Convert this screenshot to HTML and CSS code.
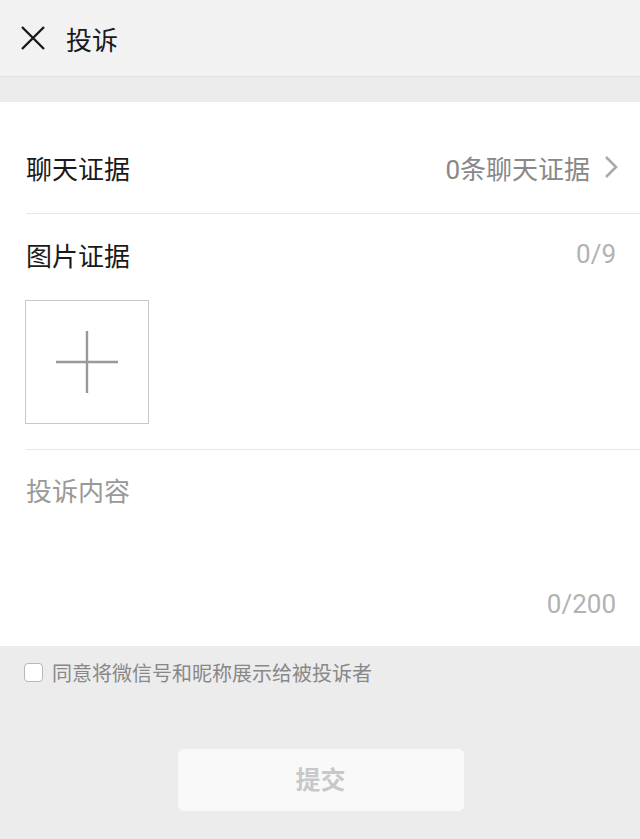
FILE: index.html
```html
<!DOCTYPE html>
<html>
  <head>
  <meta charset="utf-8">
  <link rel="stylesheet" href="styles.css">
  </head>
  <body>
    <div class="topbar">
      <svg class="close_icon" width="26" height="26" viewBox="0 0 26 26">
        <path d="M2 2 L24 24 M24 2 L2 24" stroke="#1a1a1a" stroke-width="2.4" fill="none"/>
      </svg>
      <span class="title">投诉</span>
    </div>
    <div class="gap"></div>
    <div class="panel">
      <div class="row chat_row">
        <span class="label">聊天证据</span>
        <span class="chat_value">0条聊天证据
          <svg class="arrow" width="14" height="24" viewBox="0 0 14 24">
            <path d="M2 2 L12 12 L2 22" stroke="#aaa" stroke-width="2.6" fill="none"/>
          </svg>
        </span>
      </div>
      <div class="pic_block">
        <div class="row pic_head">
          <span class="label">图片证据</span>
          <span class="count">0/9</span>
        </div>
        <div class="add_box">
          <svg width="64" height="64" viewBox="0 0 64 64">
            <path d="M32 1 L32 63 M1 32 L63 32" stroke="#999" stroke-width="2.4" fill="none"/>
          </svg>
        </div>
      </div>
      <div class="content_block">
        <div class="placeholder">投诉内容</div>
        <div class="count words">0/200</div>
      </div>
    </div>
    <div class="agree">
      <span class="check"></span>
      <span>同意将微信号和昵称展示给被投诉者</span>
    </div>
    <div class="submit_wrap">
      <button class="submit_btn">提交</button>
    </div>
  </body>
</html>
```
FILE: styles.css
```css
body {
  margin: 0;
  background-color: #ececec;
  font-family: "Noto Sans CJK SC", "Noto Sans", sans-serif;
  height: 839px;
  overflow: hidden;
}
.topbar {
  height: 76px;
  background-color: #f2f2f2;
  border-bottom: 1px solid #e2e2e2;
  display: flex;
  align-items: center;
}
.close_icon {
  margin-left: 20px;
  margin-right: 20px;
}
.title {
  font-size: 26px;
  color: #1a1a1a;
}
.gap { height: 25px; }
.panel {
  background-color: white;
  padding-left: 26px;
}
.row {
  display: flex;
  justify-content: space-between;
  align-items: center;
  padding-right: 24px;
}
.label {
  font-size: 26px;
  color: #1a1a1a;
}
.chat_row {
  height: 112px;
  box-sizing: border-box;
  padding-top: 19px;
  border-bottom: 1px solid #e8e8e8;
  padding-right: 22px;
}
.chat_value {
  font-family: "Roboto", "Noto Sans CJK SC", sans-serif;
  font-size: 26px;
  color: #888;
  display: flex;
  align-items: center;
}
.arrow { margin-left: 14px; }
.pic_block {
  border-bottom: 1px solid #e8e8e8;
  padding-bottom: 25px;
}
.pic_head {
  height: 80px;
  margin-bottom: 6px;
}
.count {
  font-family: "Roboto", "Noto Sans CJK SC", sans-serif;
  font-size: 26px;
  color: #b2b2b2;
}
.add_box {
  width: 122px;
  height: 122px;
  margin-left: -1px;
  border: 1px solid #c8c8c8;
  display: flex;
  align-items: center;
  justify-content: center;
}
.content_block {
  height: 196px;
  display: flex;
  flex-direction: column;
  justify-content: space-between;
  padding-right: 24px;
  padding-top: 21px;
  padding-bottom: 27px;
  box-sizing: border-box;
}
.placeholder {
  font-size: 26px;
  color: #999;
}
.words { text-align: right; }
.agree {
  display: flex;
  align-items: center;
  height: 52px;
  padding-left: 24px;
  font-size: 20px;
  color: #888;
}
.check {
  width: 17px;
  height: 17px;
  border: 1.5px solid #b8b8b8;
  border-radius: 4px;
  background-color: white;
  margin-right: 9px;
}
.submit_wrap {
  display: flex;
  justify-content: center;
  padding-top: 51px;
}
.submit_btn {
  width: 286px;
  height: 62px;
  padding: 0 0 4px 0;
  border: none;
  border-radius: 6px;
  background-color: #f9f9f9;
  color: #c8c8c8;
  font-family: "Noto Sans CJK SC", sans-serif;
  font-size: 25px;
  font-weight: bold;
  margin-left: 1px;
}
```
